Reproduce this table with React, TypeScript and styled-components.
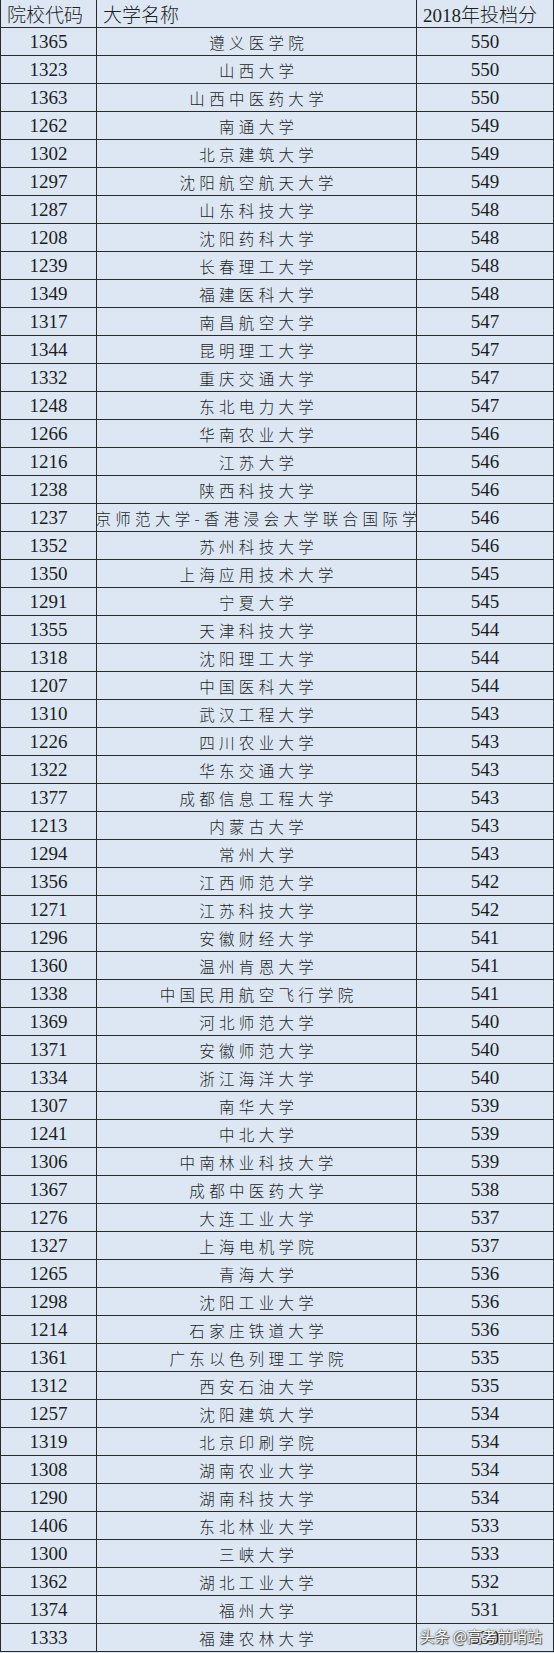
import React, { FC } from 'react'
import styled, { createGlobalStyle } from 'styled-components'

const ROWS: [string, string, string][] = [
  ['1365', '遵义医学院', '550'],
  ['1323', '山西大学', '550'],
  ['1363', '山西中医药大学', '550'],
  ['1262', '南通大学', '549'],
  ['1302', '北京建筑大学', '549'],
  ['1297', '沈阳航空航天大学', '549'],
  ['1287', '山东科技大学', '548'],
  ['1208', '沈阳药科大学', '548'],
  ['1239', '长春理工大学', '548'],
  ['1349', '福建医科大学', '548'],
  ['1317', '南昌航空大学', '547'],
  ['1344', '昆明理工大学', '547'],
  ['1332', '重庆交通大学', '547'],
  ['1248', '东北电力大学', '547'],
  ['1266', '华南农业大学', '546'],
  ['1216', '江苏大学', '546'],
  ['1238', '陕西科技大学', '546'],
  ['1237', '北京师范大学-香港浸会大学联合国际学院', '546'],
  ['1352', '苏州科技大学', '546'],
  ['1350', '上海应用技术大学', '545'],
  ['1291', '宁夏大学', '545'],
  ['1355', '天津科技大学', '544'],
  ['1318', '沈阳理工大学', '544'],
  ['1207', '中国医科大学', '544'],
  ['1310', '武汉工程大学', '543'],
  ['1226', '四川农业大学', '543'],
  ['1322', '华东交通大学', '543'],
  ['1377', '成都信息工程大学', '543'],
  ['1213', '内蒙古大学', '543'],
  ['1294', '常州大学', '543'],
  ['1356', '江西师范大学', '542'],
  ['1271', '江苏科技大学', '542'],
  ['1296', '安徽财经大学', '541'],
  ['1360', '温州肯恩大学', '541'],
  ['1338', '中国民用航空飞行学院', '541'],
  ['1369', '河北师范大学', '540'],
  ['1371', '安徽师范大学', '540'],
  ['1334', '浙江海洋大学', '540'],
  ['1307', '南华大学', '539'],
  ['1241', '中北大学', '539'],
  ['1306', '中南林业科技大学', '539'],
  ['1367', '成都中医药大学', '538'],
  ['1276', '大连工业大学', '537'],
  ['1327', '上海电机学院', '537'],
  ['1265', '青海大学', '536'],
  ['1298', '沈阳工业大学', '536'],
  ['1214', '石家庄铁道大学', '536'],
  ['1361', '广东以色列理工学院', '535'],
  ['1312', '西安石油大学', '535'],
  ['1257', '沈阳建筑大学', '534'],
  ['1319', '北京印刷学院', '534'],
  ['1308', '湖南农业大学', '534'],
  ['1290', '湖南科技大学', '534'],
  ['1406', '东北林业大学', '533'],
  ['1300', '三峡大学', '533'],
  ['1362', '湖北工业大学', '532'],
  ['1374', '福州大学', '531'],
  ['1333', '福建农林大学', '530'],
]

const App: FC = () => (
  <Root>
    <GlobalStyle />
    <Sheet>
      <Row>
        <HeadCell>院校代码</HeadCell>
        <HeadCell>大学名称</HeadCell>
        <HeadCell>2018年投档分</HeadCell>
      </Row>
      {ROWS.map(([code, name, score]) => (
        <Row key={code}>
          <NumCell>{code}</NumCell>
          <NameCell>
            <NameText>{name}</NameText>
          </NameCell>
          <NumCell>{score}</NumCell>
        </Row>
      ))}
    </Sheet>
    <Watermark>头条 @高考前哨站</Watermark>
  </Root>
)

const GlobalStyle = createGlobalStyle`
  html, body {
    margin: 0;
    padding: 0;
    background: #dce7f3;
  }
`

const Root = styled.div`
  position: relative;
  width: 554px;
  background: #dce7f3;
`

const Sheet = styled.div`
  width: 553px;
  border-left: 1px solid #2a2a2a;
`

const Row = styled.div`
  display: grid;
  grid-template-columns: 96px 320px 1fr;
  height: 28px;
  border-bottom: 1px solid #2a2a2a;
  box-sizing: border-box;

  &:first-child {
    height: 28px;
  }
`

const Cell = styled.div`
  display: flex;
  align-items: center;
  border-right: 1px solid #2a2a2a;
  overflow: hidden;
  white-space: nowrap;
  color: #1e1e1e;
`

const HeadCell = styled(Cell)`
  justify-content: flex-start;
  padding-left: 6px;
  font-family: 'Liberation Serif', 'Noto Sans CJK SC', serif;
  font-size: 19px;
  font-weight: 300;
`

const NumCell = styled(Cell)`
  justify-content: center;
  font-family: 'Liberation Serif', serif;
  font-size: 19px;
`

const NameCell = styled(Cell)`
  justify-content: center;
`

const NameText = styled.span`
  font-family: 'Noto Sans CJK SC', sans-serif;
  font-size: 15.5px;
  font-weight: 300;
  letter-spacing: 4.3px;
  margin-right: -4.3px;
`

const Watermark = styled.div`
  position: absolute;
  right: 12px;
  bottom: 6px;
  font-family: 'Noto Sans CJK SC', sans-serif;
  font-size: 15px;
  color: #ffffff;
  text-shadow: 0 0 1px #555, 0 0 2px #555, 1px 1px 1px #444;
  letter-spacing: 0;
`

export default App
